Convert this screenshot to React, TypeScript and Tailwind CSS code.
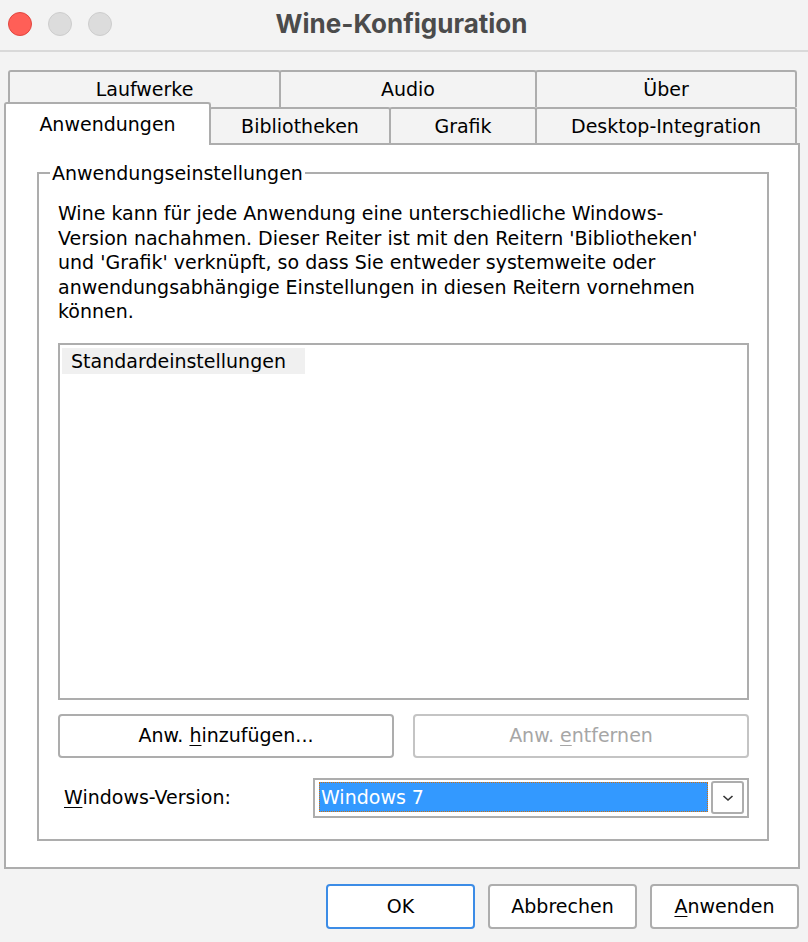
import React from 'react'

const ui = "font-['DejaVu_Sans',sans-serif] text-[19px] text-black"

function Tab({label, className}: {label: string; className: string}) {
  return (
    <div className={`flex items-center justify-center border-2 border-b-0 border-[#adadad] rounded-t-[3px] bg-[#f3f3f3] ${className}`}>
      {label}
    </div>
  )
}

function Button({children, className = ''}: {children: React.ReactNode; className?: string}) {
  return (
    <div className={`flex items-center justify-center border-2 rounded-[4px] bg-white ${className}`}>
      {children}
    </div>
  )
}

export default function App() {
  return (
    <div className={`w-[808px] h-[942px] bg-[#f3f3f3] flex flex-col overflow-hidden ${ui}`}>
      {/* title bar */}
      <div className="h-[52px] border-b-2 border-[#d9d9d9] grid grid-cols-[1fr_auto_1fr] items-center">
        <div className="flex gap-[16px] pl-[8px] -mt-[3px]">
          <span className="w-[24px] h-[24px] rounded-full bg-[#ff5f57] border border-[#e2463f]"></span>
          <span className="w-[24px] h-[24px] rounded-full bg-[#dcdcdc] border border-[#cdcdcd]"></span>
          <span className="w-[24px] h-[24px] rounded-full bg-[#dcdcdc] border border-[#cdcdcd]"></span>
        </div>
        <div className="font-['Inter',sans-serif] font-bold text-[26px] text-[#4b4b4b] -mt-[3px] -ml-[5px]">Wine-Konfiguration</div>
        <div></div>
      </div>

      {/* tabs */}
      <div className="mt-[18px] flex h-[37px] pl-[8px]">
        <Tab label="Laufwerke" className="w-[273px]" />
        <Tab label="Audio" className="w-[258px] -ml-[2px]" />
        <Tab label="Über" className="w-[262px] -ml-[2px]" />
      </div>
      <div className="flex items-end h-[36px] pl-[4px]">
        <div className="relative z-10 w-[207px] h-[43px] -mb-[2px] flex items-start justify-center pt-[6px] border-2 border-b-0 border-[#adadad] rounded-t-[3px] bg-white">
          Anwendungen
        </div>
        <Tab label="Bibliotheken" className="w-[182px] h-[36px] -ml-[2px]" />
        <Tab label="Grafik" className="w-[148px] h-[36px] -ml-[2px]" />
        <Tab label="Desktop-Integration" className="w-[262px] h-[36px] -ml-[2px]" />
      </div>

      {/* panel */}
      <div className="ml-[4px] w-[796px] h-[726px] border-2 border-[#adadad] bg-white flex flex-col pt-[16px] pl-[31px] pr-[29px] pb-[26px]">
        <fieldset className="flex-1 border-2 border-[#adadad] pl-[19px] pr-[18px]">
          <legend className="-ml-[8px] px-[2px] leading-[24px] mt-[1px]">Anwendungseinstellungen</legend>
          <p className="mt-[16px] leading-[24.5px] whitespace-nowrap">
            Wine kann für jede Anwendung eine unterschiedliche Windows-<br />
            Version nachahmen. Dieser Reiter ist mit den Reitern 'Bibliotheken'<br />
            und 'Grafik' verknüpft, so dass Sie entweder systemweite oder<br />
            anwendungsabhängige Einstellungen in diesen Reitern vornehmen<br />
            können.
          </p>

          <div className="mt-[19px] h-[357px] border-2 border-[#adadad] bg-white pt-[3px] pl-[2px]">
            <div className="w-fit h-[26px] leading-[26px] pl-[9px] pr-[19px] bg-[#f0f0f0]">Standardeinstellungen</div>
          </div>

          <div className="mt-[14px] grid grid-cols-2 gap-[19px]">
            <Button className="h-[44px] border-[#adadad]">
              <span>Anw. <u className="underline-offset-[3px]">h</u>inzufügen...</span>
            </Button>
            <Button className="h-[44px] border-[#c4c4c4] text-[#a6a6a6]">
              <span>Anw. <u className="underline-offset-[3px]">e</u>ntfernen</span>
            </Button>
          </div>

          <div className="mt-[20px] flex items-center">
            <span className="pl-[6px]"><u className="underline-offset-[3px]">W</u>indows-Version:</span>
            <div className="ml-auto w-[436px] h-[40px] border-2 border-[#adadad] bg-white flex items-center pl-[4px] pr-[3px]">
              <div className="flex-1 h-[30px] mt-[-2px] bg-[#3399ff] border border-dotted border-[#d0700f] text-white leading-[28px] pl-[1px]">Windows 7</div>
              <div className="ml-[3px] w-[33px] h-[33px] border-2 border-[#adadad] rounded-[3px] bg-white flex items-center justify-center">
                <svg width="12" height="8" viewBox="0 0 12 8" fill="none">
                  <path d="M1.5 2 L6 6 L10.5 2" stroke="#333" strokeWidth="1.6" />
                </svg>
              </div>
            </div>
          </div>
        </fieldset>
      </div>

      {/* bottom buttons */}
      <div className="mt-[15px] flex justify-end gap-[13px] pr-[9px]">
        <Button className="w-[149px] h-[45px] border-[#3c8ce6]">OK</Button>
        <Button className="w-[149px] h-[45px] border-[#adadad]">Abbrechen</Button>
        <Button className="w-[149px] h-[45px] border-[#adadad]">
          <span><u className="underline-offset-[3px]">A</u>nwenden</span>
        </Button>
      </div>
    </div>
  )
}
